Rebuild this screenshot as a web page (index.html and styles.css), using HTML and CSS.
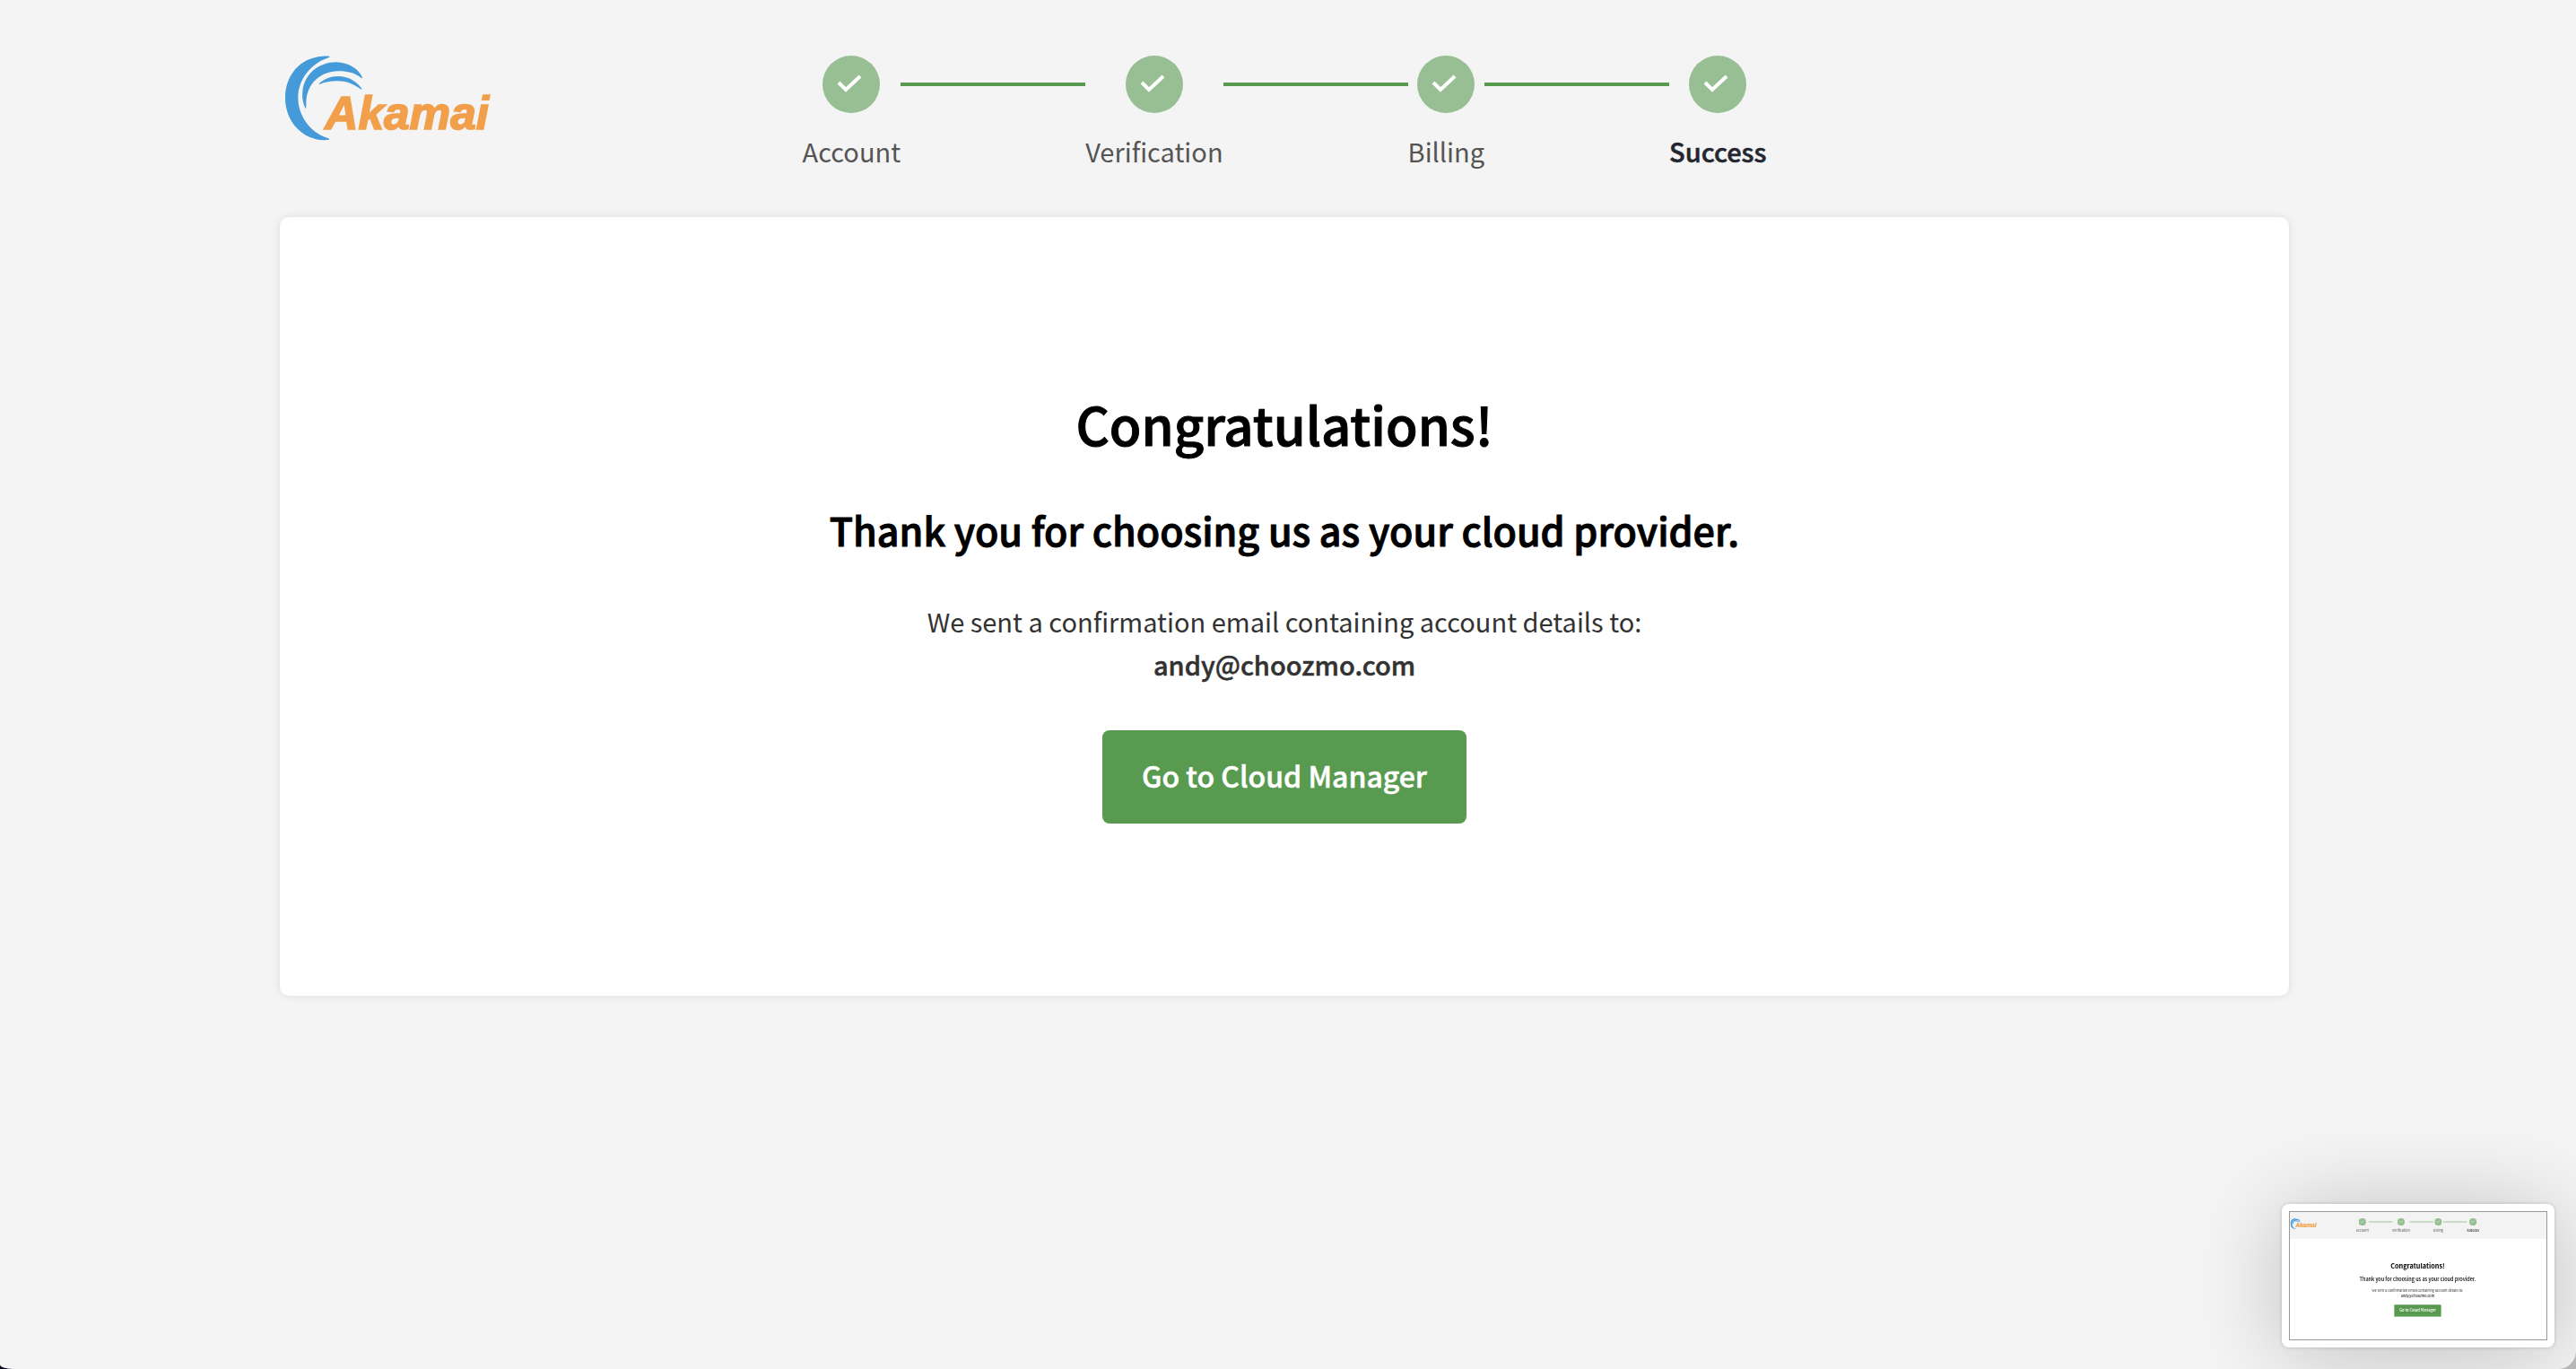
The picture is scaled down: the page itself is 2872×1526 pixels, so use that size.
FILE: index.html
```html
<!DOCTYPE html>
<html lang="en">
<head>
<meta charset="utf-8">
<meta name="viewport" content="width=device-width, initial-scale=1">
<title>Akamai – Success</title>
<link rel="stylesheet" href="styles.css">
</head>
<body>
<svg class="defs" aria-hidden="true">
  <symbol id="done" viewBox="0 0 64 64">
    <circle cx="32" cy="32" r="32" fill="#97bf93"/>
    <path d="M18 30L26 38L42 23" fill="none" stroke="#fff" stroke-width="4"/>
  </symbol>
</svg>

<div class="window">
  <div class="page">
    <header class="header">
      <a class="logo" href="#" aria-label="Akamai">
        <svg viewBox="84 60 720 300">
          <g id="akamai">
            <g fill="#459bda">
              <path d="M232 68C215 66 190 68 165 78C115 98 84 148 84 208C84 268 118 318 165 338C190 349 212 350 230 347C232 346 232 344 229 343C170 325 127 270 127 207C127 145 170 92 230 72C233 71 233 69 232 68Z"/>
              <path d="M152 243C142 222 140 205 142 185C148 128 195 88 255 88C300 90 330 112 342 139C343 142 340 142 338 140C318 123 285 116 255 118C200 122 155 160 154 225C154 232 155 240 152 243Z"/>
              <path d="M197 160C212 145 235 135 262 135C297 136 322 152 340 176C341 180 339 180 336 178C312 160 285 150 255 151C235 151 215 155 200 161C198 162 196 162 197 160Z"/>
            </g>
            <text class="wordmark" x="217" y="312">Akamai</text>
          </g>
        </svg>
      </a>
      <ol class="steps">
        <li class="step"><svg class="badge"><use href="#done"/></svg><span>Account</span></li>
        <li class="line"></li>
        <li class="step"><svg class="badge"><use href="#done"/></svg><span>Verification</span></li>
        <li class="line"></li>
        <li class="step"><svg class="badge"><use href="#done"/></svg><span>Billing</span></li>
        <li class="line"></li>
        <li class="step current" aria-current="step"><svg class="badge"><use href="#done"/></svg><span>Success</span></li>
      </ol>
    </header>

    <main class="card">
      <h1>Congratulations!</h1>
      <h2>Thank you for choosing us as your cloud provider.</h2>
      <p>We sent a confirmation email containing account details to:<br><strong>andy@choozmo.com</strong></p>
      <button type="button" class="cta">Go to Cloud Manager</button>
    </main>
  </div>
</div>

<aside class="preview">
  <svg class="shot" viewBox="320 8 2232 1108" preserveAspectRatio="none">
    <rect x="320" y="8" width="2232" height="1108" fill="#fff"/>
    <rect x="320" y="8" width="2232" height="234" fill="#f3f3f3"/>
    <svg x="324" y="60" width="240" height="100" viewBox="84 60 720 300"><use href="#akamai"/></svg>
    <path d="M1005 94H1212M1362 94H1569M1654 94H1860" stroke="#b9d6b6" stroke-width="12"/>
    <use href="#done" x="919" y="62" width="64" height="64"/>
    <use href="#done" x="1255" y="62" width="64" height="64"/>
    <use href="#done" x="1579" y="62" width="64" height="64"/>
    <use href="#done" x="1881" y="62" width="64" height="64"/>
    <g class="mini">
      <g class="mini-label">
        <text x="951" y="181">Account</text>
        <text x="1287" y="181">Verification</text>
        <text x="1611" y="181">Billing</text>
        <text class="mini-current" x="1913" y="181">Success</text>
      </g>
      <text class="mini-title" x="1432" y="497">Congratulations!</text>
      <text class="mini-subtitle" x="1432" y="609">Thank you for choosing us as your cloud provider.</text>
      <text class="mini-text" x="1432" y="705">We sent a confirmation email containing account details to:</text>
      <text class="mini-text mini-strong" x="1432" y="753">andy@choozmo.com</text>
      <rect x="1228" y="814" width="408" height="104" fill="#589b50"/>
      <text class="mini-cta" x="1432" y="878">Go to Cloud Manager</text>
    </g>
  </svg>
</aside>
</body>
</html>
```
FILE: styles.css
```css
* {
  box-sizing: border-box;
}

html {
  background: linear-gradient(90deg, #0b0a20 50%, #bdbdbd 50%);
}

body {
  margin: 0;
  font-family: "Noto Sans CJK SC", "Noto Sans CJK JP", sans-serif;
  font-size: 29px;
  color: #323232;
}

.defs {
  position: absolute;
  width: 0;
  height: 0;
}

.wordmark {
  font: italic bold 154px "Liberation Sans", sans-serif;
  fill: #f29f4c;
  stroke: #f29f4c;
  stroke-width: 5px;
}

.window {
  min-height: 100vh;
  padding: 60px 8px 60px 0;
  background: #f4f4f4;
  border-radius: 0 0 20px 14px / 0 0 20px 5px;
}

.page {
  width: 90%;
  max-width: 2240px;
  margin: 0 auto;
}

.header {
  display: grid;
  grid-template-columns: 1fr auto 1fr;
  align-items: start;
  padding-bottom: 54px;
}

.logo {
  padding-left: 6px;
}

.logo svg {
  display: block;
  width: 240px;
  height: 100px;
}

.steps {
  display: flex;
  margin: 0;
  padding: 2px 0 0;
  list-style: none;
}

.step {
  display: flex;
  flex-direction: column;
  align-items: center;
  gap: 22px;
  line-height: 40px;
  color: #555;
}

.badge {
  width: 64px;
  height: 64px;
}

.line {
  width: 206px;
  height: 4px;
  margin-top: 30px;
  background: #589b50;
}

.current {
  font-weight: 500;
  color: #23262e;
  -webkit-text-stroke: 0.5px;
}

.card {
  display: flex;
  flex-direction: column;
  align-items: center;
  gap: 48px;
  padding: 190px 40px 192px;
  text-align: center;
  background: #fff;
  border-radius: 10px;
  box-shadow: 0 0 10px rgba(0, 0, 0, 0.1);
}

h1,
h2,
p {
  margin: 0;
}

h1 {
  font-size: 58px;
  font-weight: 500;
  line-height: 80px;
  color: #000;
  -webkit-text-stroke: 1px;
}

h2 {
  font-size: 43px;
  font-weight: 500;
  line-height: 60px;
  color: #000;
  -webkit-text-stroke: 1px;
}

p {
  line-height: 48px;
}

strong {
  font-weight: 500;
  -webkit-text-stroke: 0.5px;
}

.cta {
  height: 104px;
  margin-top: 2px;
  padding: 0 44px 4px;
  border: 0;
  border-radius: 8px;
  background: #589b50;
  color: #fff;
  font: 500 32px/48px "Noto Sans CJK SC", "Noto Sans CJK JP", sans-serif;
  -webkit-text-stroke: 0.5px;
  cursor: pointer;
}

.preview {
  position: fixed;
  right: 24px;
  bottom: 24px;
  width: 304px;
  padding: 8px;
  background: #fff;
  border-radius: 8px;
  box-shadow: 0 0 4px rgba(0, 0, 0, 0.2), 0 8px 100px rgba(0, 0, 0, 0.22);
}

.shot {
  display: block;
  width: 288px;
  height: 144px;
  border: 1px solid #979797;
}

.mini {
  text-anchor: middle;
}

.mini-label {
  font-size: 29px;
  fill: #555;
}

.mini-current {
  font-weight: 500;
  fill: #23262e;
}

.mini-title {
  font-size: 57px;
  font-weight: 700;
}

.mini-subtitle {
  font-size: 43px;
  font-weight: 500;
}

.mini-text {
  font-size: 29px;
  fill: #323232;
}

.mini-strong {
  font-weight: 500;
}

.mini-cta {
  font-size: 32px;
  font-weight: 500;
  fill: #fff;
}
```
